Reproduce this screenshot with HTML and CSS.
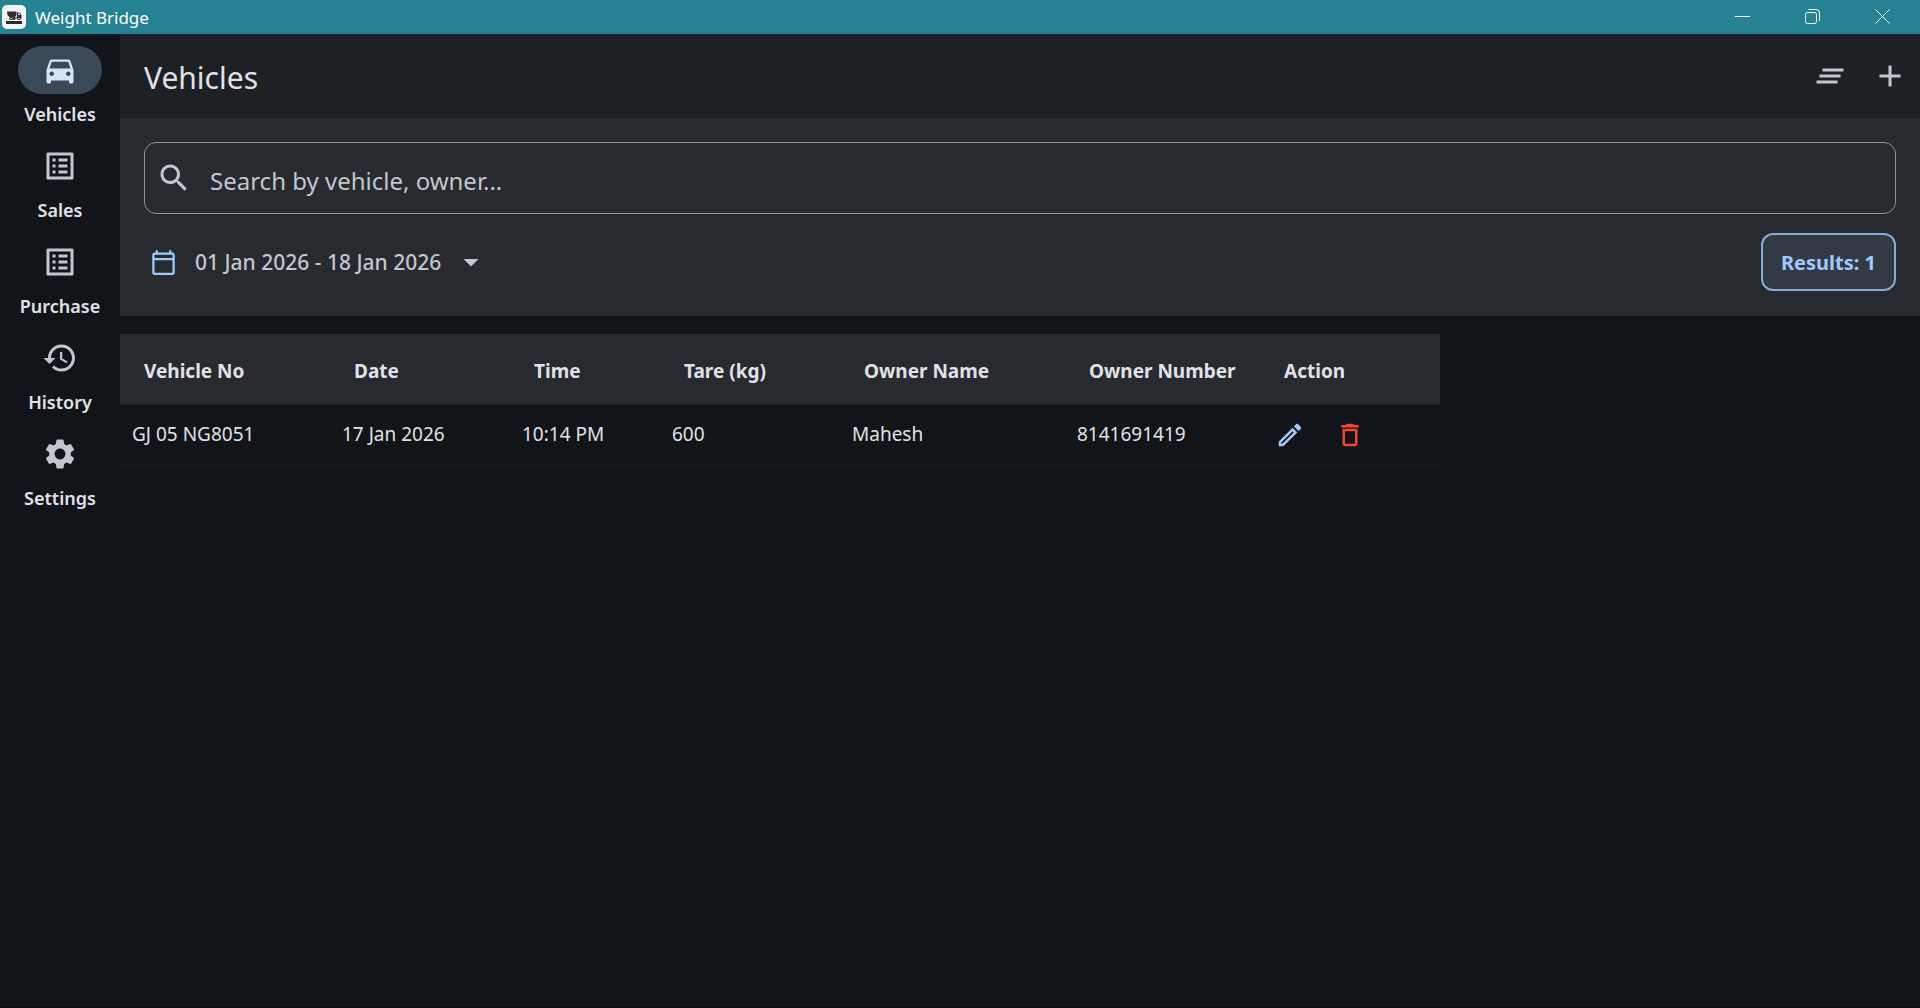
FILE: index.html
```html
<!DOCTYPE html>
<html lang="en">

<head>
  <meta charset="utf-8">
  <meta name="viewport" content="width=device-width,initial-scale=1">
  <title>Weight Bridge</title>
  <link rel="stylesheet" href="styles.css">
</head>

<body>
  <!-- Window title bar -->
  <header class="titlebar">
    <svg class="app-icon" viewBox="0 0 24 24">
      <rect width="24" height="24" rx="5" fill="#f4f4f4" />
      <path fill="#2b2b2b" d="M5 6.500h9.500v3.500l-1.500 2H7.500L5.500 10zM15 7.500h2.500l2 2.500v3.500H7.500v-1h7.500zM4 16h16v3H4z" />
      <circle cx="9" cy="13.500" r="1.800" fill="#2b2b2b" />
      <circle cx="12" cy="13.500" r="1.500" fill="#2b2b2b" />
      <circle cx="17" cy="13.500" r="1.800" fill="#2b2b2b" />
      <circle cx="9" cy="13.500" r=".8" fill="#f4f4f4" />
      <circle cx="17" cy="13.500" r=".8" fill="#f4f4f4" />
      <path fill="#f4f4f4" d="M16 8.500h1.200l1.200 1.500H16z" />
    </svg>
    <span class="app-name">Weight Bridge</span>
    <div class="window-controls">
      <button aria-label="Minimize">
        <svg viewBox="0 0 16 16"><path d="M0 7.500h15" /></svg>
      </button>
      <button aria-label="Restore">
        <svg viewBox="0 0 16 16"><rect x=".5" y="3.500" width="11" height="11" rx="2" /><path d="M3.500 .5H11a3.500 3.500 0 0 1 3.500 3.500v8" /></svg>
      </button>
      <button aria-label="Close">
        <svg viewBox="0 0 16 16"><path d="M.5 .5l14 14M14.500 .5l-14 14" /></svg>
      </button>
    </div>
  </header>

  <div class="app">
    <!-- Navigation rail -->
    <nav class="rail">
      <a class="rail-item active" href="#vehicles">
        <span class="pill"><svg class="icon" viewBox="0 0 24 24"><path d="M18.920 6.010C18.720 5.420 18.160 5 17.500 5h-11c-.66 0-1.210.42-1.420 1.010L3 12v8c0 .55.45 1 1 1h1c.55 0 1-.45 1-1v-1h12v1c0 .55.45 1 1 1h1c.55 0 1-.45 1-1v-8l-2.080-5.990zM6.500 16c-.83 0-1.500-.67-1.500-1.500S5.670 13 6.500 13s1.500.67 1.500 1.500S7.330 16 6.500 16zm11 0c-.83 0-1.500-.67-1.500-1.500s.67-1.500 1.500-1.500 1.500.67 1.500 1.500-.67 1.500-1.500 1.500zM5 11l1.500-4.500h11L19 11H5z" /></svg></span>
        <span class="rail-label">Vehicles</span>
      </a>
      <a class="rail-item" href="#sales">
        <span class="pill"><svg class="icon" viewBox="0 0 24 24"><path d="M19 5v14H5V5h14m1.100-2H3.900c-.5 0-.9.4-.9.9v16.200c0 .4.4.9.9.9h16.200c.4 0 .9-.5.9-.9V3.900c0-.5-.5-.9-.9-.9zM11 7h6v2h-6V7zm0 4h6v2h-6v-2zm0 4h6v2h-6zM7 7h2v2H7zm0 4h2v2H7zm0 4h2v2H7z" /></svg></span>
        <span class="rail-label">Sales</span>
      </a>
      <a class="rail-item" href="#purchase">
        <span class="pill"><svg class="icon" viewBox="0 0 24 24"><path d="M19 5v14H5V5h14m1.100-2H3.900c-.5 0-.9.4-.9.9v16.200c0 .4.4.9.9.9h16.200c.4 0 .9-.5.9-.9V3.900c0-.5-.5-.9-.9-.9zM11 7h6v2h-6V7zm0 4h6v2h-6v-2zm0 4h6v2h-6zM7 7h2v2H7zm0 4h2v2H7zm0 4h2v2H7z" /></svg></span>
        <span class="rail-label">Purchase</span>
      </a>
      <a class="rail-item" href="#history">
        <span class="pill"><svg class="icon" viewBox="0 0 24 24"><path d="M13 3c-4.970 0-9 4.030-9 9H1l3.890 3.890.07.14L9 12H6c0-3.870 3.130-7 7-7s7 3.130 7 7-3.130 7-7 7c-1.930 0-3.680-.79-4.940-2.060l-1.420 1.420C8.270 19.990 10.510 21 13 21c4.970 0 9-4.030 9-9s-4.030-9-9-9zm-1 5v5l4.280 2.540.72-1.210-3.500-2.080V8H12z" /></svg></span>
        <span class="rail-label">History</span>
      </a>
      <a class="rail-item" href="#settings">
        <span class="pill"><svg class="icon" viewBox="0 0 24 24"><path d="M19.140 12.940c.04-.3.06-.61.06-.94 0-.32-.02-.64-.07-.94l2.030-1.580c.18-.14.23-.41.12-.61l-1.920-3.320c-.12-.22-.37-.29-.59-.22l-2.390.96c-.5-.38-1.030-.7-1.620-.94l-.36-2.540c-.04-.24-.24-.41-.48-.41h-3.840c-.24 0-.43.17-.47.41l-.36 2.540c-.59.24-1.130.57-1.620.94l-2.390-.96c-.22-.08-.47 0-.59.22L2.740 8.870c-.12.21-.08.47.12.61l2.030 1.580c-.05.3-.09.63-.09.94s.02.64.07.94l-2.030 1.580c-.18.14-.23.41-.12.61l1.920 3.320c.12.22.37.29.59.22l2.390-.96c.5.38 1.030.7 1.620.94l.36 2.540c.05.24.24.41.48.41h3.840c.24 0 .44-.17.47-.41l.36-2.540c.59-.24 1.130-.56 1.620-.94l2.390.96c.22.08.47 0 .59-.22l1.920-3.320c.12-.22.07-.47-.12-.61l-2.010-1.580zM12 15.600c-1.980 0-3.600-1.620-3.600-3.600s1.620-3.600 3.600-3.600 3.600 1.620 3.600 3.600-1.620 3.600-3.600 3.600z" /></svg></span>
        <span class="rail-label">Settings</span>
      </a>
    </nav>

    <main class="content">
      <div class="appbar">
        <h1>Vehicles</h1>
        <button class="icon-button" aria-label="Clear filters">
          <svg class="icon" viewBox="0 0 24 24"><path d="M5 13h14v-2H5v2zm-2 4h14v-2H3v2zM7 7v2h14V7H7z" /></svg>
        </button>
        <button class="icon-button" aria-label="Add vehicle">
          <svg class="icon" viewBox="0 0 24 24"><path d="M19 13h-6v6h-2v-6H5v-2h6V5h2v6h6v2z" /></svg>
        </button>
      </div>

      <section class="filters">
        <label class="search">
          <svg class="icon" viewBox="0 0 24 24"><path d="M15.500 14h-.79l-.28-.27C15.410 12.590 16 11.110 16 9.500 16 5.910 13.090 3 9.500 3S3 5.910 3 9.500 5.910 16 9.500 16c1.610 0 3.090-.59 4.230-1.570l.27.28v.79l5 4.990L20.490 19l-4.990-5zm-6 0C7.010 14 5 11.990 5 9.500S7.010 5 9.500 5 14 7.010 14 9.500 11.990 14 9.500 14z" /></svg>
          <input type="text" placeholder="Search by vehicle, owner..." aria-label="Search by vehicle, owner">
        </label>
        <div class="filter-row">
          <button class="date-range">
            <svg class="icon calendar" viewBox="0 0 24 24"><path d="M20 3h-1V1h-2v2H7V1H5v2H4c-1.100 0-2 .9-2 2v16c0 1.100.9 2 2 2h16c1.100 0 2-.9 2-2V5c0-1.100-.9-2-2-2zm0 18H4V10h16v11zm0-13H4V5h16v3z" /></svg>
            <span>01 Jan 2026 - 18 Jan 2026</span>
            <svg class="icon" viewBox="0 0 24 24"><path d="M7 10l5 5 5-5z" /></svg>
          </button>
          <span class="results">Results: 1</span>
        </div>
      </section>

      <table class="vehicles">
        <colgroup>
          <col class="col-vehicle">
          <col class="col-date">
          <col class="col-time">
          <col class="col-tare">
          <col class="col-owner">
          <col class="col-number">
          <col class="col-action">
        </colgroup>
        <thead>
          <tr>
            <th>Vehicle No</th>
            <th>Date</th>
            <th>Time</th>
            <th>Tare (kg)</th>
            <th>Owner Name</th>
            <th>Owner Number</th>
            <th>Action</th>
          </tr>
        </thead>
        <tbody>
          <tr>
            <td>GJ 05 NG8051</td>
            <td>17 Jan 2026</td>
            <td>10:14 PM</td>
            <td>600</td>
            <td>Mahesh</td>
            <td>8141691419</td>
            <td class="actions">
              <div class="action-buttons">
                <button class="icon-button edit" aria-label="Edit">
                  <svg class="icon" viewBox="0 0 24 24"><path d="M14.060 9.020l.92.92L5.920 19H5v-.92l9.060-9.060M17.660 3c-.25 0-.51.1-.7.29l-1.830 1.830 3.750 3.750 1.830-1.830c.39-.39.39-1.020 0-1.410l-2.340-2.340c-.2-.2-.45-.29-.71-.29zm-3.600 3.190L3 17.250V21h3.750L17.810 9.940l-3.750-3.750z" /></svg>
                </button>
                <button class="icon-button delete" aria-label="Delete">
                  <svg class="icon" viewBox="0 0 24 24"><path d="M6 19c0 1.100.9 2 2 2h8c1.100 0 2-.9 2-2V7H6v12zM8 9h8v10H8V9zm7.500-5l-1-1h-5l-1 1H5v2h14V4h-3.500z" /></svg>
                </button>
              </div>
            </td>
          </tr>
        </tbody>
      </table>
    </main>
  </div>
</body>

</html>
```
FILE: styles.css
```css
* {
  box-sizing: border-box;
}

body {
  margin: 0;
  min-height: 100vh;
  display: flex;
  flex-direction: column;
  background-color: #111418;
  border-bottom: 1px solid #0c0910;
  color: #e1e2e8;
  font-family: "Noto Sans", sans-serif;
  font-size: 19px;
}

button {
  padding: 0;
  border: none;
  background: none;
  color: inherit;
  font: inherit;
  cursor: pointer;
}

a {
  color: inherit;
  text-decoration: none;
}

.icon {
  display: block;
  flex: none;
  width: 36px;
  height: 36px;
  fill: currentColor;
}

/* Window title bar */

.titlebar {
  display: flex;
  align-items: center;
  height: 34px;
  padding: 0 2px;
  background-color: #258292;
  color: #fff;
}

.app-icon {
  width: 24px;
  height: 24px;
}

.app-name {
  flex: 1;
  padding-left: 9px;
  font-size: 17px;
}

.window-controls {
  display: flex;
}

.window-controls button {
  width: 70px;
  height: 34px;
  display: flex;
  align-items: center;
  justify-content: center;
}

.window-controls svg {
  width: 16px;
  height: 16px;
  fill: none;
  stroke: #fff;
}

.app {
  flex: 1;
  display: flex;
}

/* Navigation rail */

.rail {
  flex: none;
  width: 120px;
  padding-top: 12px;
}

.rail-item {
  display: flex;
  flex-direction: column;
  align-items: center;
  height: 96px;
}

.pill {
  display: flex;
  align-items: center;
  justify-content: center;
  width: 84px;
  height: 48px;
  border-radius: 24px;
  color: #c3c6cf;
}

.rail-item.active .pill {
  background-color: #3b4858;
  color: #d7e3f8;
}

.rail-label {
  padding-top: 7px;
  font-size: 18px;
  font-weight: 600;
  line-height: 26px;
}

.content {
  flex: 1;
  min-width: 0;
}

/* App bar */

.appbar {
  display: flex;
  align-items: center;
  height: 84px;
  padding-left: 24px;
  background-color: #1d2024;
}

.appbar h1 {
  flex: 1;
  margin: 0;
  padding-top: 2px;
  font-size: 30px;
  font-weight: 400;
}

.icon-button {
  display: flex;
  align-items: center;
  justify-content: center;
  width: 60px;
  height: 60px;
  color: #c3c6cf;
}

/* Search and filters */

.filters {
  padding: 24px 24px 25px;
  background-color: #272a2e;
}

.search {
  display: flex;
  align-items: center;
  height: 72px;
  padding: 0 11px;
  gap: 18px;
  border: 1px solid #8d9199;
  border-radius: 12px;
  color: #c3c6cf;
}

.search input {
  flex: 1;
  padding: 4px 0 0;
  border: none;
  outline: none;
  background: none;
  color: #e1e2e8;
  font: inherit;
  font-size: 24px;
}

.search input::placeholder {
  color: #c3c6cf;
  opacity: 1;
}

.filter-row {
  display: flex;
  align-items: center;
  justify-content: space-between;
  margin-top: 19px;
}

.date-range {
  display: flex;
  align-items: center;
  padding-left: 6px;
  color: #c3c6cf;
  font-size: 21px;
  font-weight: 500;
}

.date-range span {
  padding: 0 12px 0 18px;
}

.date-range .calendar {
  width: 27px;
  height: 27px;
  color: #a0cafd;
}

.results {
  padding: 15px 18px 13px;
  border: 2px solid #88aad4;
  border-radius: 12px;
  background-color: #343a44;
  color: #a0cafd;
  font-size: 20px;
  font-weight: 700;
  line-height: 26px;
}

/* Vehicle table */

.vehicles {
  width: 1320px;
  margin-top: 18px;
  border-collapse: collapse;
  table-layout: fixed;
}

.col-vehicle {
  width: 210px;
}

.col-date,
.col-tare,
.col-action {
  width: 180px;
}

.col-time {
  width: 150px;
}

.col-owner {
  width: 225px;
}

.col-number {
  width: 195px;
}

.vehicles th {
  height: 70px;
  padding: 5px 0 0 24px;
  background-color: #272a2e;
  font-weight: 700;
  text-align: left;
}

.vehicles td {
  height: 61px;
  padding: 0 12px 2px;
  border-top: 1px solid #1d2024;
  border-bottom: 1px solid #191c20;
}

.vehicles td.actions {
  padding: 0;
}

.action-buttons {
  display: flex;
}

.action-buttons .icon {
  width: 30px;
  height: 30px;
}

.edit {
  color: #a0cafd;
}

.delete {
  color: #f44336;
}
```
